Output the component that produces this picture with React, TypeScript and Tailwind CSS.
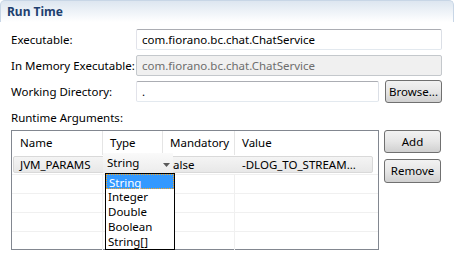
import React from "react";

const font = { fontFamily: '"Noto Sans", "Open Sans", sans-serif' };

function Button({ label, className = "" }: { label: string; className?: string }) {
  return (
    <div
      className={
        "flex items-center justify-center rounded-[3px] border border-[#707070] bg-gradient-to-b from-[#f2f2f2] via-[#e6e6e6] to-[#d0d0d0] text-[11.5px] text-black " +
        className
      }
    >
      {label}
    </div>
  );
}

function Field({ value, disabled = false, className = "" }: { value: string; disabled?: boolean; className?: string }) {
  return (
    <div
      className={
        "flex h-[21px] items-center whitespace-nowrap rounded-[2px] border px-[5px] text-[11.5px] " +
        (disabled
          ? "border-[#c4c8cc] bg-[#f0f0f0] text-[#6d6d6d] "
          : "border-[#abadb3] border-l-[#e2e3ea] border-r-[#dbdfe6] border-b-[#e3e9ef] bg-white text-black ") +
        className
      }
    >
      {value}
    </div>
  );
}

export default function App() {
  const types = ["String", "Integer", "Double", "Boolean", "String[]"];
  const emptyRows = [0, 1, 2, 3];

  return (
    <div className="relative h-[257px] w-[454px] overflow-hidden bg-white text-[11.5px] text-black" style={font}>
      {/* section header */}
      <div className="flex h-[22px] items-center rounded-t-[5px] border border-b-0 border-[#c8d6e6] bg-gradient-to-b from-[#dde6f0] to-white pl-[6px]">
        <span className="text-[12px] font-bold text-[#1e3f6f]">Run Time</span>
      </div>

      <div className="px-[11px] pt-[7px]">
        <div className="flex h-[21px] items-center">
          <span className="w-[125px] whitespace-nowrap">Executable:</span>
          <Field value="com.fiorano.bc.chat.ChatService" className="w-[306px]" />
        </div>
        <div className="mt-[5px] flex h-[21px] items-center">
          <span className="w-[125px] whitespace-nowrap">In Memory Executable:</span>
          <Field value="com.fiorano.bc.chat.ChatService" disabled className="w-[306px]" />
        </div>
        <div className="mt-[4px] flex h-[23px] items-center">
          <span className="w-[125px] whitespace-nowrap">Working Directory:</span>
          <Field value="." className="w-[243px]" />
          <Button label="Browse..." className="ml-[6px] h-[23px] w-[57px]" />
        </div>
        <div className="mt-[6px] flex h-[18px] items-center">Runtime Arguments:</div>

        <div className="mt-[3px] flex">
          {/* table */}
          <div className="relative h-[120px] w-[368px] border border-[#828790] bg-white">
            <div className="flex h-[24px] items-center">
              <div className="h-full w-[91px] border-r border-[#e5e5e5] pl-[8px] leading-[24px]">Name</div>
              <div className="h-full w-[60px] border-r border-[#e5e5e5] pl-[7px] leading-[24px]">Type</div>
              <div className="h-full w-[72px] border-r border-[#e5e5e5] pl-[7px] leading-[24px]">Mandatory</div>
              <div className="h-full flex-1 pl-[7px] leading-[24px]">Value</div>
            </div>

            <div className="relative flex h-[19px]">
              <div className="absolute inset-y-[1px] left-[1px] right-[5px] rounded-[2px] border border-[#d9d9d9] bg-gradient-to-b from-[#f4f4f4] to-[#e8e8e8]" />
              <div className="relative w-[91px] pl-[8px] leading-[19px]">JVM_PARAMS</div>
              <div className="relative -mt-[2px] flex h-[20px] w-[70px] items-center bg-gradient-to-b from-[#fafafa] to-[#ececec] pl-[4px]">
                <span className="flex-1">String</span>
                <svg width="7" height="4" viewBox="0 0 7 4" className="mr-[3px] mt-[3px]">
                  <path d="M0 0 H7 L3.5 4 Z" fill="#5a5a5a" />
                </svg>
              </div>
              <div className="relative w-[62px] leading-[19px]">alse</div>
              <div className="relative flex-1 pl-[7px] leading-[19px]">-DLOG_TO_STREAM...</div>
            </div>

            {emptyRows.map((r) => (
              <div key={r} className="flex h-[19px] border-t border-[#f0f0f0]">
                <div className="w-[91px] border-r border-[#f0f0f0]" />
                <div className="w-[60px] border-r border-[#f0f0f0]" />
                <div className="w-[72px] border-r border-[#f0f0f0]" />
                <div className="flex-1" />
              </div>
            ))}

            {/* open combo list */}
            <div className="absolute left-[93px] top-[42px] w-[70px] border border-black bg-white text-[11.5px]">
              {types.map((t, i) => (
                <div
                  key={t}
                  className={
                    "h-[15px] pl-[2px] leading-[15px] " +
                    (i === 0 ? "border border-dotted border-[#f5a623] bg-[#3399ff] pl-[1px] leading-[13px] text-white" : "")
                  }
                >
                  {t}
                </div>
              ))}
            </div>
          </div>

          <div className="ml-[5px] flex flex-col gap-[6px]">
            <Button label="Add" className="h-[23px] w-[57px]" />
            <Button label="Remove" className="h-[24px] w-[57px]" />
          </div>
        </div>
      </div>
    </div>
  );
}
